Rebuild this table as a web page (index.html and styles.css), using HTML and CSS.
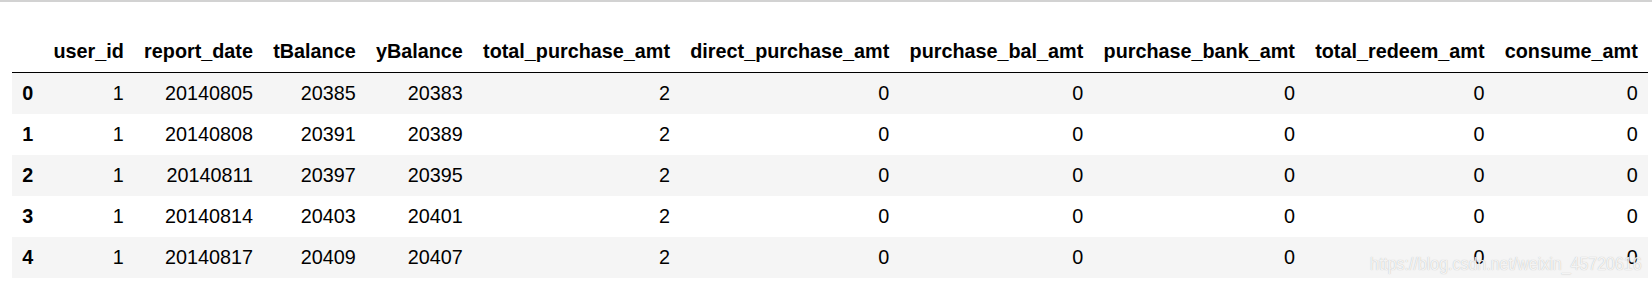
FILE: index.html
```html
<!DOCTYPE html>
<html>
<head>
<meta charset="utf-8">
<link rel="stylesheet" href="styles.css">
</head>
<body>
<div class="topbar"></div>
<div class="output">
<table class="dataframe">
  <thead>
    <tr>
      <th></th>
      <th>user_id</th>
      <th>report_date</th>
      <th>tBalance</th>
      <th>yBalance</th>
      <th>total_purchase_amt</th>
      <th>direct_purchase_amt</th>
      <th>purchase_bal_amt</th>
      <th>purchase_bank_amt</th>
      <th>total_redeem_amt</th>
      <th>consume_amt</th>
    </tr>
  </thead>
  <tbody>
    <tr><th>0</th><td>1</td><td>20140805</td><td>20385</td><td>20383</td><td>2</td><td>0</td><td>0</td><td>0</td><td>0</td><td>0</td></tr>
    <tr><th>1</th><td>1</td><td>20140808</td><td>20391</td><td>20389</td><td>2</td><td>0</td><td>0</td><td>0</td><td>0</td><td>0</td></tr>
    <tr><th>2</th><td>1</td><td>20140811</td><td>20397</td><td>20395</td><td>2</td><td>0</td><td>0</td><td>0</td><td>0</td><td>0</td></tr>
    <tr><th>3</th><td>1</td><td>20140814</td><td>20403</td><td>20401</td><td>2</td><td>0</td><td>0</td><td>0</td><td>0</td><td>0</td></tr>
    <tr><th>4</th><td>1</td><td>20140817</td><td>20409</td><td>20407</td><td>2</td><td>0</td><td>0</td><td>0</td><td>0</td><td>0</td></tr>
  </tbody>
</table>
<div class="watermark">https://blog.csdn.net/weixin_45720616</div>
</div>
</body>
</html>
```
FILE: styles.css
```css
html, body {
  margin: 0;
  padding: 0;
  background: #ffffff;
}
body {
  font-family: "Liberation Sans", Arial, sans-serif;
  color: #000;
}
.topbar {
  height: 2px;
  background: #d2d2d2;
}
.output {
  position: relative;
  padding: 29px 0 0 12px;
}
.dataframe {
  border-collapse: collapse;
  border-spacing: 0;
  border: none;
  font-size: 19.8px;
}
.dataframe th,
.dataframe td {
  padding: 10px 10.15px;
  line-height: 21px;
  text-align: right;
  vertical-align: middle;
  white-space: nowrap;
  border: none;
}
.dataframe thead tr {
  border-bottom: 1px solid #000;
}
.dataframe th {
  font-weight: bold;
}
.dataframe tbody th {
  text-align: left;
}
.dataframe tbody tr:nth-child(odd) {
  background: #f5f5f5;
}
.watermark {
  position: absolute;
  left: 1370px;
  top: 251px;
  font-size: 19px;
  line-height: 22px;
  color: rgba(255, 255, 255, 0.85);
  text-shadow: 0 0 1px rgba(120, 120, 120, 0.55);
  white-space: nowrap;
  transform: scaleX(0.84);
  transform-origin: left center;
}
```
